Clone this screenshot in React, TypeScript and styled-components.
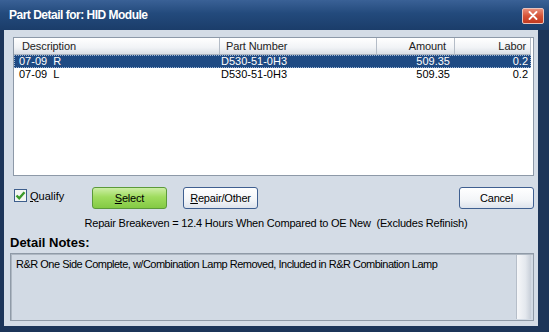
import React from 'react';
import styled, { createGlobalStyle } from 'styled-components';

const Global = createGlobalStyle`
    html, body {
        margin: 0;
        padding: 0;
        background: #1c3559;
    }
    body {
        font-family: 'Liberation Sans', Arial, sans-serif;
        font-size: 11px;
        color: #000;
    }
`;

const Window = styled.div`
    width: 549px;
    height: 332px;
    display: flex;
    flex-direction: column;
    background: #1c3559;
    overflow: hidden;
`;

const TitleBar = styled.div`
    height: 30px;
    flex: none;
    display: flex;
    align-items: center;
    justify-content: space-between;
    padding: 0 5px 0 9px;
    background: linear-gradient(#3a6196 0%, #234a7c 45%, #1b3d6a 100%);
    box-sizing: border-box;
`;

const Title = styled.span`
    color: #fff;
    font-weight: bold;
    font-size: 12px;
    letter-spacing: -0.5px;
`;

const CloseButton = styled.div`
    width: 22px;
    height: 16px;
    margin-top: 1px;
    border-radius: 2px;
    border: 1px solid #e9c4bc;
    box-sizing: border-box;
    background: linear-gradient(#e98d78 0%, #d55337 50%, #c2391f 100%);
    display: flex;
    align-items: center;
    justify-content: center;
`;

const Body = styled.div`
    flex: 1;
    margin: 0 11px 6px 4px;
    background: #d4dce6;
    padding: 7px 4px 0 6px;
    box-sizing: border-box;
`;

const ListBox = styled.div`
    margin-left: 3px;
    height: 139px;
    background: #fff;
    border: 1px solid #8d99a8;
    box-sizing: border-box;
`;

const Grid = styled.div`
    display: grid;
    grid-template-columns: 206px 157px 78px 76px;
`;

const HeaderCell = styled.div<{ $right?: boolean; $pad: number }>`
    height: 16px;
    line-height: 16px;
    background: linear-gradient(#ffffff 0%, #f1f3f6 60%, #d9dee6 100%);
    border-bottom: 1px solid #a9b2be;
    border-right: 1px solid #b4bcc7;
    text-align: ${p => (p.$right ? 'right' : 'left')};
    padding: ${p => (p.$right ? `0 ${p.$pad}px 0 0` : `0 0 0 ${p.$pad}px`)};
    color: #222;
    letter-spacing: -0.1px;
    white-space: nowrap;
    &:last-child {
        border-right: none;
    }
`;

const Row = styled.div<{ $selected?: boolean }>`
    grid-column: 1 / -1;
    display: grid;
    grid-template-columns: subgrid;
    height: 13px;
    line-height: 13px;
    background: ${p => (p.$selected ? '#1f4a83' : 'transparent')};
    color: ${p => (p.$selected ? '#fff' : '#000')};
    outline: ${p => (p.$selected ? '1px dotted #9fb6d4' : 'none')};
    outline-offset: -1px;
`;

const Cell = styled.div<{ $right?: boolean; $pad: number }>`
    text-align: ${p => (p.$right ? 'right' : 'left')};
    padding: ${p => (p.$right ? `0 ${p.$pad}px 0 0` : `0 0 0 ${p.$pad}px`)};
    white-space: pre;
`;

const Controls = styled.div`
    display: flex;
    align-items: center;
    margin-top: 11px;
    margin-left: 4px;
    height: 22px;
`;

const CheckLabel = styled.label`
    display: flex;
    align-items: center;
    gap: 3px;
    width: 78px;
    margin-top: -5px;
`;

const Button = styled.div<{ $variant?: 'green' | 'plain' }>`
    width: 75px;
    height: 22px;
    box-sizing: border-box;
    border-radius: 3px;
    display: flex;
    align-items: center;
    justify-content: center;
    border: 1px solid ${p => (p.$variant === 'green' ? '#5c9a3a' : '#3f5f90')};
    background: ${p =>
        p.$variant === 'green'
            ? 'linear-gradient(#cdeea6 0%, #9fdc5e 45%, #84ca44 100%)'
            : 'linear-gradient(#ffffff 0%, #f3f5f8 60%, #dde3ec 100%)'};
    color: #000;
    letter-spacing: -0.2px;
`;

const Gap = styled.div`
    width: 16px;
`;

const Spacer = styled.div`
    flex: 1;
`;

const Breakeven = styled.div`
    text-align: center;
    margin-top: 8px;
    height: 13px;
    line-height: 13px;
    padding-left: 8px;
    white-space: pre;
    letter-spacing: -0.2px;
`;

const NotesLabel = styled.div`
    font-weight: bold;
    font-size: 13px;
    margin-top: 5px;
    line-height: 15px;
`;

const NotesBox = styled.div`
    margin-top: 3px;
    height: 68px;
    width: 524px;
    box-sizing: border-box;
    border: 1px solid #8f9aa7;
    box-shadow: inset 1px 1px 0 #aeb7c2;
    background: #d2dae4;
    display: flex;
`;

const NotesText = styled.div`
    flex: 1;
    padding: 4px 0 0 5px;
    letter-spacing: -0.5px;
`;

const ScrollTrack = styled.div`
    width: 14px;
    margin: 1px 2px 1px 0;
    background: linear-gradient(90deg, #f6f7f9 0%, #e4e8ee 60%, #c7ced8 100%);
    border-left: 1px solid #b6bec9;
`;

const U = styled.span`
    text-decoration: underline;
`;

const CheckIcon = () => (
    <svg width="13" height="13" viewBox="0 0 13 13">
        <rect x="0.5" y="0.5" width="12" height="12" fill="#f4f6f2" stroke="#3d5e8c" />
        <path d="M2.5 6.5 L5.2 9.2 L10.5 3.2" fill="none" stroke="#3c9a2a" strokeWidth="2.4" />
    </svg>
);

const XIcon = () => (
    <svg width="10" height="9" viewBox="0 0 10 9">
        <path d="M1.5 1 L8.5 8 M8.5 1 L1.5 8" stroke="#fff" strokeWidth="1.8" strokeLinecap="round" />
    </svg>
);

const rows = [
    { desc: '07-09  R', part: 'D530-51-0H3', amount: '509.35', labor: '0.2', selected: true },
    { desc: '07-09  L', part: 'D530-51-0H3', amount: '509.35', labor: '0.2' },
];

export default function App() {
    return (
        <Window>
            <Global />
            <TitleBar>
                <Title>Part Detail for: HID Module</Title>
                <CloseButton><XIcon /></CloseButton>
            </TitleBar>
            <Body>
                <ListBox>
                    <Grid>
                        <HeaderCell $pad={8}>Description</HeaderCell>
                        <HeaderCell $pad={6}>Part Number</HeaderCell>
                        <HeaderCell $right $pad={8}>Amount</HeaderCell>
                        <HeaderCell $right $pad={4}>Labor</HeaderCell>
                        {rows.map(r => (
                            <Row key={r.desc} $selected={r.selected}>
                                <Cell $pad={5}>{r.desc}</Cell>
                                <Cell $pad={1}>{r.part}</Cell>
                                <Cell $right $pad={5}>{r.amount}</Cell>
                                <Cell $right $pad={3}>{r.labor}</Cell>
                            </Row>
                        ))}
                    </Grid>
                </ListBox>
                <Controls>
                    <CheckLabel><CheckIcon /><span><U>Q</U>ualify</span></CheckLabel>
                    <Button $variant="green"><span><U>S</U>elect</span></Button>
                    <Gap />
                    <Button><span><U>R</U>epair/Other</span></Button>
                    <Spacer />
                    <Button>Cancel</Button>
                </Controls>
                <Breakeven>Repair Breakeven = 12.4 Hours When Compared to OE New  (Excludes Refinish)</Breakeven>
                <NotesLabel>Detail Notes:</NotesLabel>
                <NotesBox>
                    <NotesText>R&amp;R One Side Complete, w/Combination Lamp Removed, Included in R&amp;R Combination Lamp</NotesText>
                    <ScrollTrack />
                </NotesBox>
            </Body>
        </Window>
    );
}
